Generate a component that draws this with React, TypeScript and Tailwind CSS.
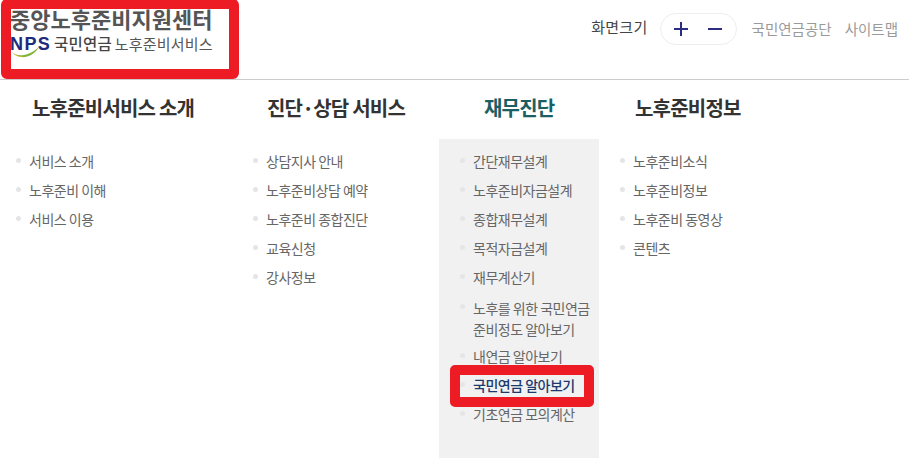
import React from 'react';

const font = "font-['Noto_Sans_CJK_KR','Noto_Sans',sans-serif]";

const Logo = () => (
    <div className="pl-[10px] pt-[3px]">
        <div className="text-[22px] leading-[30px] font-bold text-[#555]">중앙노후준비지원센터</div>
        <div className="flex items-center h-[24px] -mt-[1px]">
            <div className="relative w-[44px] h-[24px]">
                <span className="absolute left-0 top-0 text-[18px] leading-[24px] font-bold text-[#1c2a80] tracking-[1.4px] font-['Liberation_Sans',sans-serif]">NPS</span>
                <svg className="absolute left-[1px] top-[14px]" width="34" height="14" viewBox="0 0 34 14" fill="none">
                    <path d="M1 6 C6 11 17 11 28 1 C21 13 7 14 1 6 Z" fill="#7fb53a" />
                    <path d="M1 6 C5 10 10 11 14 10 C9 12 4 10 1 6 Z" fill="#f2b632" />
                </svg>
            </div>
            <span className="text-[15.5px] font-medium text-[#444] tracking-[0.2px]">국민연금</span>
            <span className="ml-[3px] text-[15px] text-[#555] tracking-[0.2px]">노후준비서비스</span>
        </div>
    </div>
);

const SizeControl = () => (
    <div className="flex items-center">
        <span className="-mt-[3px] text-[15px] text-[#444] tracking-[0.3px]">화면크기</span>
        <div className="ml-[12px] w-[77px] h-[32px] rounded-full border border-[#eeeeee] flex items-center justify-center gap-[20px]">
            <svg width="14" height="14" viewBox="0 0 14 14"><path d="M7 0v14M0 7h14" stroke="#2b2d80" strokeWidth="2" /></svg>
            <svg width="14" height="14" viewBox="0 0 14 14"><path d="M0 7h14" stroke="#2b2d80" strokeWidth="2" /></svg>
        </div>
        <span className="ml-[15px] text-[14.5px] text-[#9a9a9a]">국민연금공단</span>
        <span className="ml-[13px] text-[14.5px] text-[#9a9a9a]">사이트맵</span>
    </div>
);

type Item = { label: React.ReactNode; active?: boolean; tall?: boolean };

const List = ({ items }: { items: Item[] }) => (
    <ul>
        {items.map((item, i) => (
            <li key={i} className={item.tall ? 'flex items-start h-[50px] pt-[7px]' : 'flex items-start h-[29px] pt-[3px]'}>
                <span className={`${item.tall ? 'mt-[6px]' : 'mt-[9px]'} w-[5px] h-[5px] rounded-full bg-[#e3e5e8] shrink-0`} />
                <span className={`ml-[8px] text-[14px] tracking-[-0.5px] ${item.tall ? 'leading-[21px]' : 'leading-[24px]'} ${item.active ? 'text-[#1c3a6e] font-medium' : 'text-[#666]'}`}>{item.label}</span>
            </li>
        ))}
    </ul>
);

const titleCls = 'h-[59px] pt-[13px] text-[20px] leading-[29px] font-bold tracking-[-0.8px]';

const App: React.FC = () => {
    return (
        <div className={`relative w-[909px] h-[458px] overflow-hidden bg-white ${font}`}>
            <header className="flex justify-between h-[80px] border-b border-[#cccccc]">
                <Logo />
                <div className="pr-[11px] pt-[13px]">
                    <SizeControl />
                </div>
            </header>

            <nav className="flex h-[378px] pl-[16px]">
                <div className="w-[237px]">
                    <h2 className={`pl-[16px] text-[#333] ${titleCls}`}>노후준비서비스 소개</h2>
                    <div className="pt-[7px]"><List items={['서비스 소개', '노후준비 이해', '서비스 이용'].map((label) => ({ label }))} /></div>
                </div>
                <div className="w-[186px]">
                    <h2 className={`pl-[14px] text-[#333] ${titleCls}`}>진단·상담 서비스</h2>
                    <div className="pt-[7px]"><List items={['상담지사 안내', '노후준비상담 예약', '노후준비 종합진단', '교육신청', '강사정보'].map((label) => ({ label }))} /></div>
                </div>
                <div className="w-[160px]">
                    <h2 className={`pl-[45px] text-[#1b5e63] ${titleCls}`}>재무진단</h2>
                    <div className="h-[319px] bg-[#f1f1f2] pt-[7px] pl-[21px]">
                        <List
                            items={[
                                { label: '간단재무설계' },
                                { label: '노후준비자금설계' },
                                { label: '종합재무설계' },
                                { label: '목적자금설계' },
                                { label: '재무계산기' },
                                { label: <>노후를 위한 국민연금<br />준비정도 알아보기</>, tall: true },
                                { label: '내연금 알아보기' },
                                { label: '국민연금 알아보기', active: true },
                                { label: '기초연금 모의계산' },
                            ]}
                        />
                    </div>
                </div>
                <div className="pl-[21px]">
                    <h2 className={`pl-[15px] text-[#333] ${titleCls}`}>노후준비정보</h2>
                    <div className="pt-[7px]"><List items={['노후준비소식', '노후준비정보', '노후준비 동영상', '콘텐츠'].map((label) => ({ label }))} /></div>
                </div>
            </nav>

            {/* red annotation boxes */}
            <div className="absolute left-[1px] top-[-1px] w-[238px] h-[80px] border-[10px] border-[#ed1c24] rounded-[6px] pointer-events-none" />
            <div className="absolute left-[450px] top-[365px] w-[144px] h-[42px] border-[10px] border-[#ed1c24] rounded-[5px] pointer-events-none" />
        </div>
    );
};

export default App;
